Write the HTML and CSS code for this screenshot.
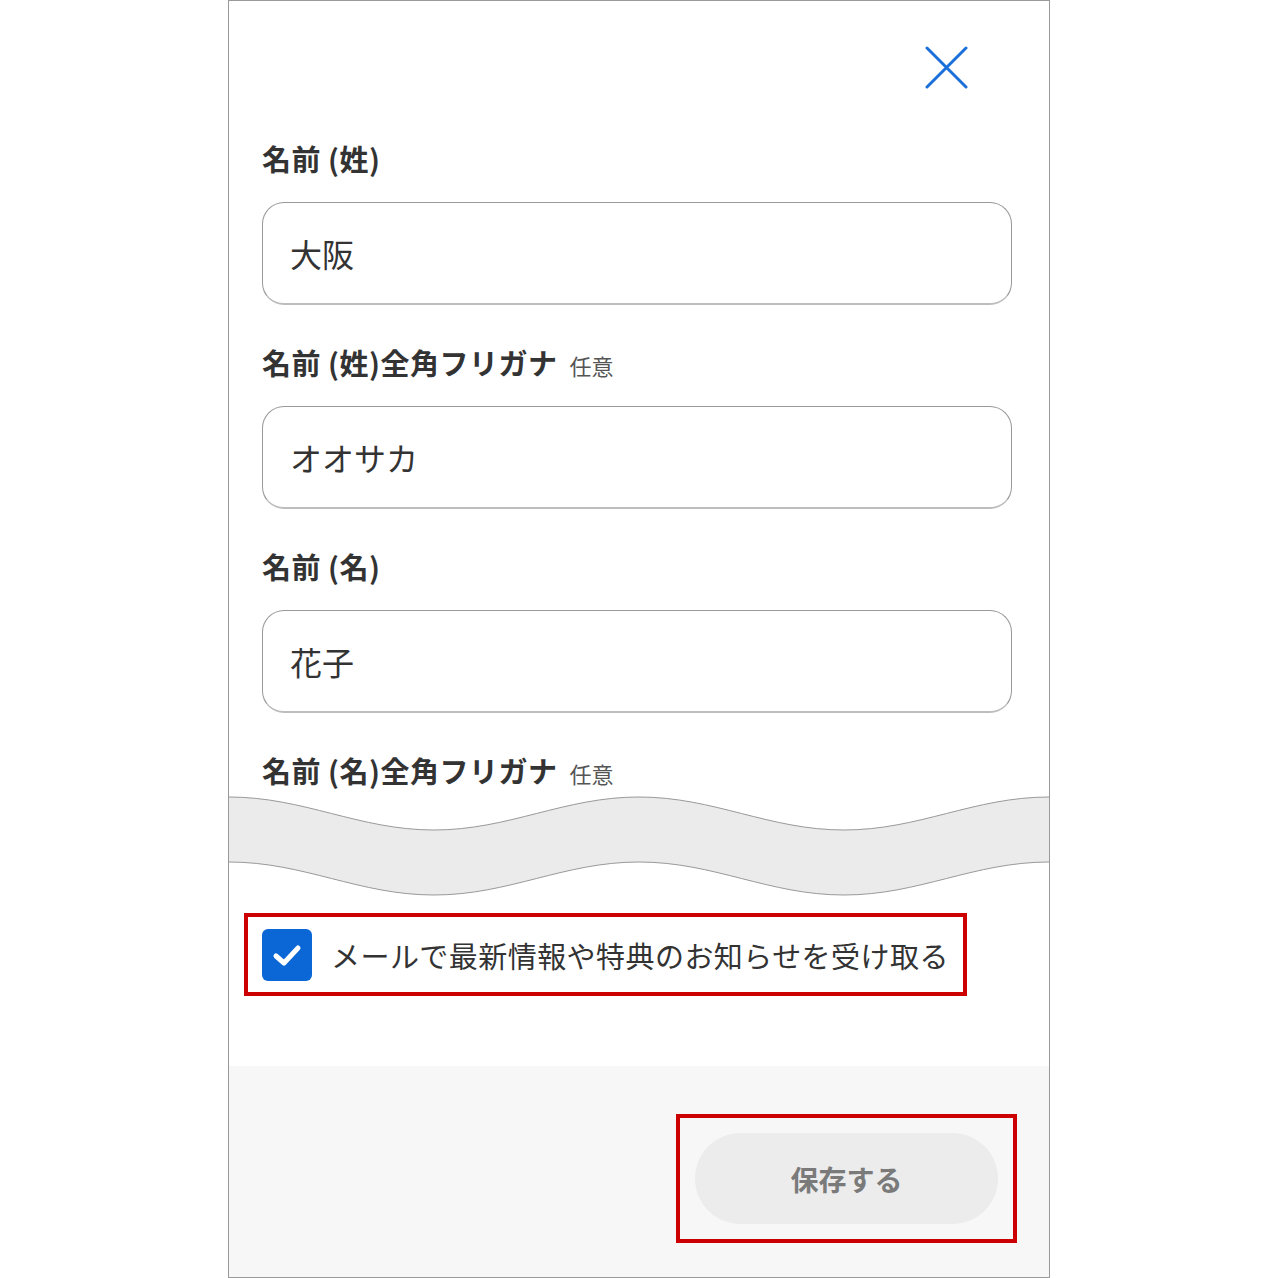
FILE: index.html
```html
<!DOCTYPE html>
<html lang="ja">
<head>
<meta charset="utf-8">
<title>名前の編集</title>
<link rel="stylesheet" href="styles.css">
</head>
<body>
<div class="frame">
  <div class="header">
    <button class="close" aria-label="閉じる">
      <svg width="44" height="44" viewBox="0 0 44 44"><path d="M2 2 L41 41 M41 2 L2 41" stroke="#1a6fd8" stroke-width="3" fill="none" stroke-linecap="round"/></svg>
    </button>
  </div>
  <div class="form">
    <div class="field">
      <div class="label">名前 (姓)</div>
      <div class="input">大阪</div>
    </div>
    <div class="field">
      <div class="label">名前 (姓)全角フリガナ<span class="opt">任意</span></div>
      <div class="input">オオサカ</div>
    </div>
    <div class="field">
      <div class="label">名前 (名)</div>
      <div class="input">花子</div>
    </div>
    <div class="field">
      <div class="label">名前 (名)全角フリガナ<span class="opt">任意</span></div>
    </div>
  </div>
  <svg class="wave" width="820" height="100" viewBox="0 0 820 100">
    <path d="M0 1 C75 1 130 34 205 34 S335 1 410 1 S540 34 615 34 S745 1 820 1 L820 66 C745 66 690 99 615 99 S485 66 410 66 S280 99 205 99 S75 66 0 66 Z" fill="#ebebeb"/>
    <path d="M0 1 C75 1 130 34 205 34 S335 1 410 1 S540 34 615 34 S745 1 820 1" fill="none" stroke="#999" stroke-width="1"/>
    <path d="M0 66 C75 66 130 99 205 99 S335 66 410 66 S540 99 615 99 S745 66 820 66" fill="none" stroke="#999" stroke-width="1"/>
  </svg>
  <div class="check-wrap">
    <label class="check-row">
      <span class="checkbox">
        <svg width="34" height="34" viewBox="0 0 34 34"><path d="M6 18 L14 25 L28 10" stroke="#fff" stroke-width="5" fill="none" stroke-linecap="round" stroke-linejoin="round"/></svg>
      </span>
      <span class="check-text">メールで最新情報や特典のお知らせを受け取る</span>
    </label>
  </div>
  <div class="footer">
    <div class="btn-wrap">
      <button class="save">保存する</button>
    </div>
  </div>
</div>
</body>
</html>
```
FILE: styles.css
```css
* { box-sizing: border-box; }
html, body { margin: 0; padding: 0; background: #fff; }
body {
  font-family: "Noto Sans CJK JP", "Noto Sans", sans-serif;
  color: #333;
}
.frame {
  width: 822px;
  height: 1278px;
  margin: 0 auto;
  border: 1px solid #999;
  display: flex;
  flex-direction: column;
  overflow: hidden;
}
.header {
  height: 137px;
  display: flex;
  justify-content: flex-end;
  padding: 45px 80px 0 0;
}
.close {
  width: 44px;
  height: 44px;
  padding: 0;
  border: 0;
  background: none;
  display: block;
}
.close svg { display: block; }
.form {
  padding-left: 33px;
  display: flex;
  flex-direction: column;
  gap: 37px;
}
.label {
  height: 40px;
  font-size: 29px;
  line-height: 40px;
  font-weight: 700;
  letter-spacing: 0.5px;
  color: #333;
  white-space: nowrap;
}
.opt {
  font-size: 22px;
  line-height: 1;
  font-weight: 400;
  letter-spacing: 0;
  color: #555;
  margin-left: 12px;
}
.input {
  margin-top: 24px;
  width: 750px;
  height: 103px;
  border: 1px solid #999;
  border-bottom: 2px solid #bdbdbd;
  border-radius: 22px;
  padding-left: 27px;
  display: flex;
  align-items: center;
  font-size: 32px;
  color: #333;
}
.wave {
  display: block;
  margin-top: 6px;
  flex: none;
}
.check-wrap {
  padding: 17px 0 0 15px;
}
.check-row {
  width: 723px;
  height: 83px;
  border: 4px solid #cc0000;
  display: flex;
  align-items: center;
  padding-left: 14px;
  gap: 19px;
}
.checkbox {
  width: 50px;
  height: 52px;
  background: #0b66d6;
  border-radius: 6px;
  display: flex;
  align-items: center;
  justify-content: center;
  flex: none;
}
.checkbox svg { display: block; }
.check-text {
  font-size: 29px;
  letter-spacing: 0.45px;
  color: #333;
  white-space: nowrap;
}
.footer {
  margin-top: 70px;
  flex: 1;
  background: #f7f7f7;
  display: flex;
  justify-content: flex-end;
  padding: 48px 32px 0 0;
}
.btn-wrap {
  width: 341px;
  height: 129px;
  border: 4px solid #cc0000;
  padding: 15px;
}
.save {
  width: 100%;
  height: 100%;
  border: 0;
  border-radius: 47px;
  background: #ececec;
  color: #7a7a7a;
  font-family: "Noto Sans CJK JP", "Noto Sans", sans-serif;
  font-size: 28px;
  font-weight: 700;
}
```
